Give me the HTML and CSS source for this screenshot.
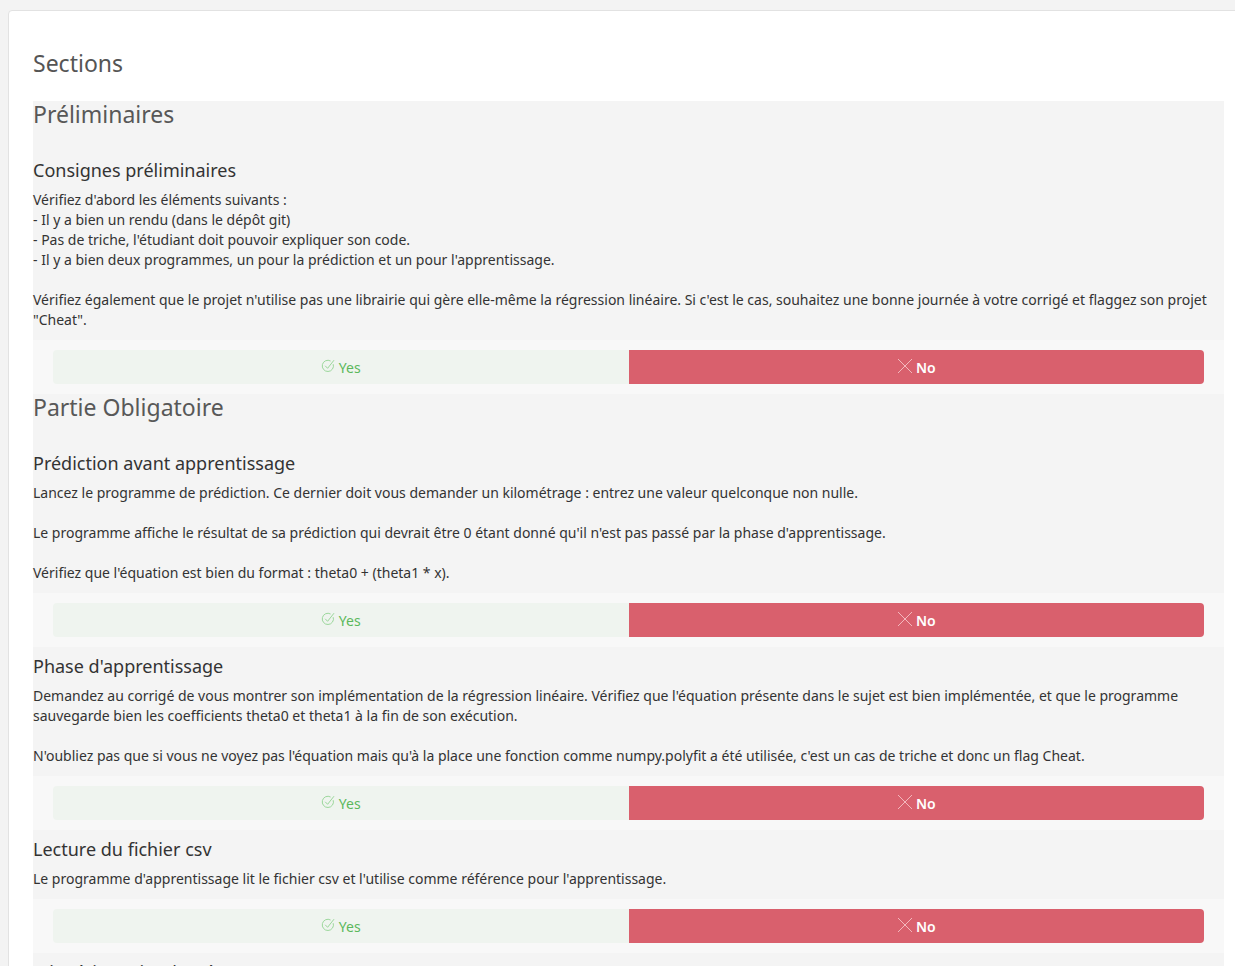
FILE: index.html
```html
<!DOCTYPE html>
<html lang="fr">
<head>
<meta charset="utf-8">
<title>Sections</title>
<link rel="stylesheet" href="styles.css">
</head>
<body>
<div class="card">
  <h1 class="page-title">Sections</h1>
  <div class="sections">
    <section class="section">
      <h2 class="section-title">Préliminaires</h2>
      <div class="item">
        <h3 class="item-title">Consignes préliminaires</h3>
        <p class="item-text">Vérifiez d'abord les éléments suivants :<br>- Il y a bien un rendu (dans le dépôt git)<br>- Pas de triche, l'étudiant doit pouvoir expliquer son code.<br>- Il y a bien deux programmes, un pour la prédiction et un pour l'apprentissage.<br><br>Vérifiez également que le projet n'utilise pas une librairie qui gère elle-même la régression linéaire. Si c'est le cas, souhaitez une bonne journée à votre corrigé et flaggez son projet "Cheat".</p>
        <div class="answer">
          <div class="btn btn-yes"><svg class="ico-yes" viewBox="0 0 14 14" width="14" height="14"><path d="M12.2 5.2A5.6 5.6 0 1 1 9.6 2" fill="none" stroke="#9bd79b" stroke-width="1"/><path d="M4.2 6.8l2.4 2.5L13 1.2" fill="none" stroke="#9bd79b" stroke-width="1"/></svg><span>Yes</span></div>
          <div class="btn btn-no"><svg class="ico-no" viewBox="0 0 16 16" width="16" height="16"><path d="M1 1L15 15M15 1L1 15" fill="none" stroke="#f3b8bd" stroke-width="1"/></svg><span>No</span></div>
        </div>
      </div>
    </section>
    <section class="section">
      <h2 class="section-title">Partie Obligatoire</h2>
      <div class="item">
        <h3 class="item-title">Prédiction avant apprentissage</h3>
        <p class="item-text">Lancez le programme de prédiction. Ce dernier doit vous demander un kilométrage : entrez une valeur quelconque non nulle.<br><br>Le programme affiche le résultat de sa prédiction qui devrait être 0 étant donné qu'il n'est pas passé par la phase d'apprentissage.<br><br>Vérifiez que l'équation est bien du format : theta0 + (theta1 * x).</p>
        <div class="answer">
          <div class="btn btn-yes"><svg class="ico-yes" viewBox="0 0 14 14" width="14" height="14"><path d="M12.2 5.2A5.6 5.6 0 1 1 9.6 2" fill="none" stroke="#9bd79b" stroke-width="1"/><path d="M4.2 6.8l2.4 2.5L13 1.2" fill="none" stroke="#9bd79b" stroke-width="1"/></svg><span>Yes</span></div>
          <div class="btn btn-no"><svg class="ico-no" viewBox="0 0 16 16" width="16" height="16"><path d="M1 1L15 15M15 1L1 15" fill="none" stroke="#f3b8bd" stroke-width="1"/></svg><span>No</span></div>
        </div>
      </div>
      <div class="item">
        <h3 class="item-title">Phase d'apprentissage</h3>
        <p class="item-text">Demandez au corrigé de vous montrer son implémentation de la régression linéaire. Vérifiez que l'équation présente dans le sujet est bien implémentée, et que le programme sauvegarde bien les coefficients theta0 et theta1 à la fin de son exécution.<br><br>N'oubliez pas que si vous ne voyez pas l'équation mais qu'à la place une fonction comme numpy.polyfit a été utilisée, c'est un cas de triche et donc un flag Cheat.</p>
        <div class="answer">
          <div class="btn btn-yes"><svg class="ico-yes" viewBox="0 0 14 14" width="14" height="14"><path d="M12.2 5.2A5.6 5.6 0 1 1 9.6 2" fill="none" stroke="#9bd79b" stroke-width="1"/><path d="M4.2 6.8l2.4 2.5L13 1.2" fill="none" stroke="#9bd79b" stroke-width="1"/></svg><span>Yes</span></div>
          <div class="btn btn-no"><svg class="ico-no" viewBox="0 0 16 16" width="16" height="16"><path d="M1 1L15 15M15 1L1 15" fill="none" stroke="#f3b8bd" stroke-width="1"/></svg><span>No</span></div>
        </div>
      </div>
      <div class="item">
        <h3 class="item-title">Lecture du fichier csv</h3>
        <p class="item-text">Le programme d'apprentissage lit le fichier csv et l'utilise comme référence pour l'apprentissage.</p>
        <div class="answer">
          <div class="btn btn-yes"><svg class="ico-yes" viewBox="0 0 14 14" width="14" height="14"><path d="M12.2 5.2A5.6 5.6 0 1 1 9.6 2" fill="none" stroke="#9bd79b" stroke-width="1"/><path d="M4.2 6.8l2.4 2.5L13 1.2" fill="none" stroke="#9bd79b" stroke-width="1"/></svg><span>Yes</span></div>
          <div class="btn btn-no"><svg class="ico-no" viewBox="0 0 16 16" width="16" height="16"><path d="M1 1L15 15M15 1L1 15" fill="none" stroke="#f3b8bd" stroke-width="1"/></svg><span>No</span></div>
        </div>
      </div>
      <div class="item">
        <h3 class="item-title">Mise à jour simultanée</h3>
        <p class="item-text">Vérifiez que theta0 et theta1 sont bien mis à jour simultanément.</p>
      </div>
    </section>
  </div>
</div>
</body>
</html>
```
FILE: styles.css
```css
html, body {
  margin: 0;
  padding: 0;
}
body {
  background: #f3f3f3;
  font-family: "Noto Sans", "Open Sans", sans-serif;
  color: #333;
  overflow: hidden;
  height: 966px;
}
.card {
  background: #fff;
  margin: 10px 0 0 8px;
  width: 1260px;
  border: 1px solid #e2e2e2;
  border-top-left-radius: 4px;
  padding: 39px 24px 0 24px;
  min-height: 1000px;
}
.page-title {
  margin: 0 0 25px;
  font-size: 23px;
  line-height: 26px;
  font-weight: 400;
  color: #555;
}
.sections {
  width: 1191px;
}
.section {
  background: #f4f4f4;
}
.section-title {
  margin: 0 0 33px;
  font-size: 23px;
  line-height: 26px;
  font-weight: 400;
  color: #585858;
}
.item-title {
  margin: 9px 0 10px;
  font-size: 18px;
  line-height: 20px;
  font-weight: 400;
  color: #333;
}
.item-text {
  margin: 0 0 10px;
  font-size: 14px;
  line-height: 20px;
  color: #333;
}
.answer {
  background: #f8f8f8;
  padding: 10px 20px;
  display: flex;
}
.btn {
  flex: 1 1 0;
  height: 34px;
  display: flex;
  align-items: center;
  justify-content: center;
  font-size: 14px;
}
.btn-yes {
  background: #eff4ef;
  color: #5cb85c;
  border-radius: 4px 0 0 4px;
  gap: 4px;
}
.btn-no {
  background: #d9606d;
  color: #fff;
  font-weight: 600;
  border-radius: 0 4px 4px 0;
  gap: 3px;
}
.ico-yes {
  display: block;
  margin-top: -2px;
}
.ico-no {
  display: block;
  margin-top: -2px;
}
```
